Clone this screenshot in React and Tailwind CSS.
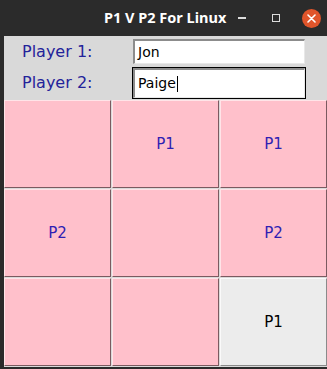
const board = ["", "P1", "P1", "P2", "", "P2", "", "", "P1"];

const Cell = ({ value, active }) => (
  <div
    className={`flex items-center justify-center border-t border-l border-b border-r text-[15px] ${
      active
        ? "bg-[#ececec] text-black border-t-[#fafafa] border-l-[#fafafa] border-b-[#8a8a8a] border-r-[#8a8a8a]"
        : "bg-[#ffc0cb] text-[#2f1fb3] border-t-[#ffe4e8] border-l-[#ffe4e8] border-b-[#7b5a60] border-r-[#7b5a60]"
    }`}
  >
    {value}
  </div>
);

const Entry = ({ value, focused }) => (
  <div
    className={`w-[174px] border ${
      focused ? "border-black h-[32px]" : "border-transparent h-[27px]"
    }`}
  >
    <div className="h-full bg-white border-t-2 border-l-2 border-b border-r border-t-[#8c8c8c] border-l-[#8c8c8c] border-b-[#e8e8e8] border-r-[#e8e8e8] flex items-center pl-[3px] text-[14px] text-black">
      {value}
      {focused && <span className="w-[1.5px] h-[16px] bg-black ml-[1px]" />}
    </div>
  </div>
);

export default function App() {
  return (
    <div
      className="w-[327px] h-[369px] bg-[#2b2b2b] flex flex-col overflow-hidden"
      style={{ fontFamily: '"DejaVu Sans", sans-serif' }}
    >
      {/* title bar */}
      <div className="h-[36px] flex items-center shrink-0">
        <div
          className="ml-[104px] text-white font-bold text-[14.5px] w-[128px]"
          style={{ fontFamily: '"Noto Sans", sans-serif' }}
        >
          P1 V P2 For Linux
        </div>
        <div className="ml-[6px] w-[8px] h-[1.5px] bg-[#dcdcdc]" />
        <div className="ml-[26px] w-[8px] h-[8px] border border-[#dcdcdc]" />
        <div className="ml-[22px] w-[19px] h-[19px] rounded-full bg-[#e0552b] flex items-center justify-center">
          <svg width="9" height="9" viewBox="0 0 9 9">
            <path d="M1 1L8 8M8 1L1 8" stroke="white" strokeWidth="1.6" strokeLinecap="round" />
          </svg>
        </div>
      </div>

      {/* body */}
      <div className="ml-[4px] h-[331px] bg-[#d9d9d9] flex flex-col">
        <div className="h-[64px] flex flex-col">
          <div className="h-[30px] flex items-center pt-[1px]">
            <div className="w-[128px] pl-[18px] text-[16px] text-[#23239a]">Player 1:</div>
            <Entry value="Jon" />
          </div>
          <div className="h-[34px] flex items-center">
            <div className="w-[128px] pl-[18px] text-[16px] text-[#23239a]">Player 2:</div>
            <Entry value="Paige" focused />
          </div>
        </div>
        <div className="flex-1 grid grid-cols-3 grid-rows-3 gap-x-[1px] gap-y-[1px] pb-[1px]">
          {board.map((v, i) => (
            <Cell key={i} value={v} active={i === 8} />
          ))}
        </div>
      </div>
    </div>
  );
}
